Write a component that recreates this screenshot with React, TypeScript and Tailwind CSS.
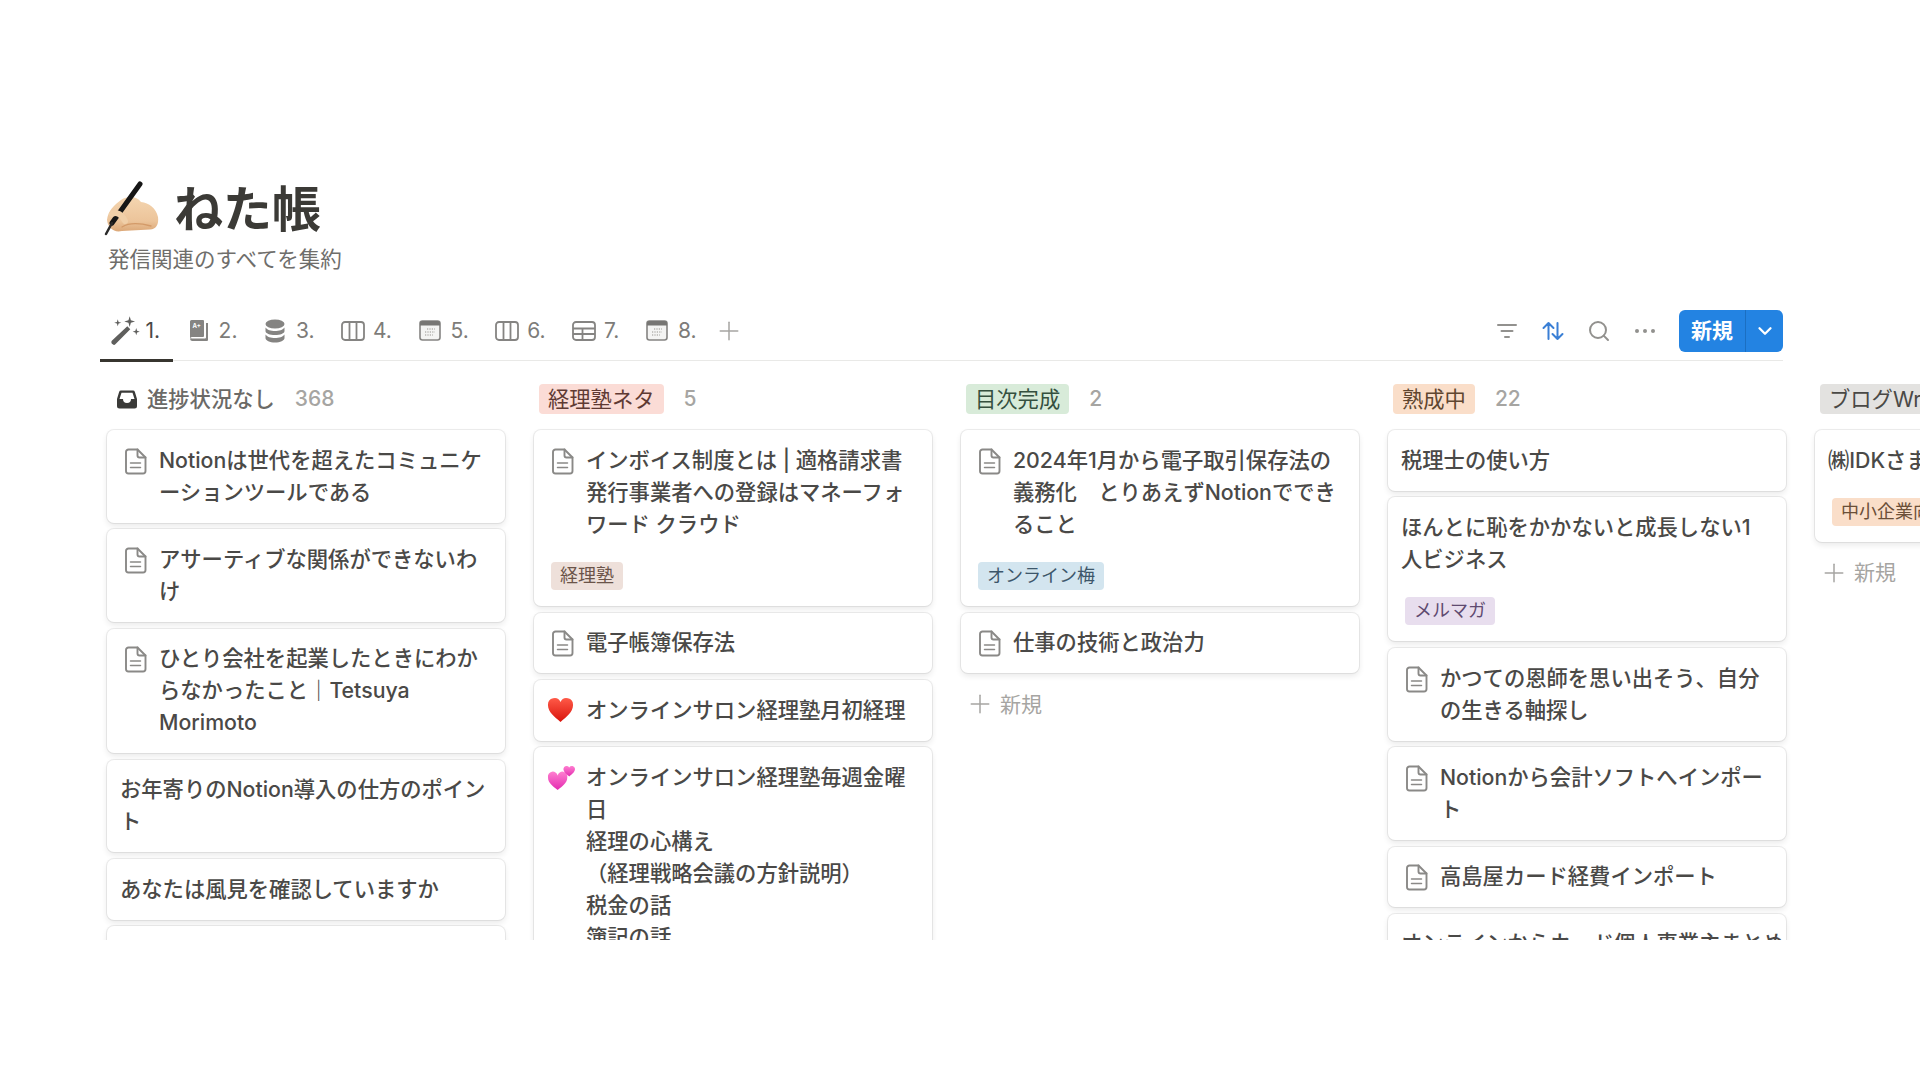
import { ChevronDown, Plus, Search } from 'lucide-react';
import type { ReactNode } from 'react';

// --- iconos dibujados a mano ---
function DocIcon() {
  return (
    <svg width="23" height="27" viewBox="0 0 23 27" fill="none" stroke="#8a8987" strokeWidth="1.900" strokeLinejoin="round" strokeLinecap="round">
      <path d="M4.500 1.500h9l8 8v13.500a2.500 2.500 0 0 1-2.500 2.500H4.500A2.500 2.500 0 0 1 2 23V4A2.500 2.500 0 0 1 4.500 1.500z" />
      <path d="M13.500 1.500V7.500a2 2 0 0 0 2 2h6" />
      <path d="M6.500 15h10M6.500 19.500h10" strokeWidth="1.500" />
    </svg>
  );
}

function RedHeart() {
  return (
    <svg width="27" height="26" viewBox="0 0 28 26" preserveAspectRatio="none">
      <defs>
        <linearGradient id="rh" x1="0" y1="0" x2="0" y2="1">
          <stop offset="0" stopColor="#ff5a48" />
          <stop offset="1" stopColor="#d9140c" />
        </linearGradient>
      </defs>
      <path d="M14 25C8 20 1 15 1 8a6.800 6.800 0 0 1 13-3 6.800 6.800 0 0 1 13 3c0 7-7 12-13 17z" fill="url(#rh)" />
    </svg>
  );
}

function PinkHearts() {
  return (
    <svg width="29" height="27" viewBox="0 0 30 28">
      <defs>
        <linearGradient id="ph" x1="0" y1="0" x2="0" y2="1">
          <stop offset="0" stopColor="#ff7fd0" />
          <stop offset="1" stopColor="#e32bb0" />
        </linearGradient>
      </defs>
      <path d="M11 27C6 23 1 19.500 1 14a4.900 4.900 0 0 1 10-2 4.900 4.900 0 0 1 10 2c0 5.500-5 9-10 13z" fill="url(#ph)" />
      <path d="M23 13c-3-2.500-6-4.500-6-8a3.300 3.300 0 0 1 6-1.500A3.300 3.300 0 0 1 29 5c0 3.500-3 5.500-6 8z" fill="url(#ph)" />
    </svg>
  );
}

function WritingHand() {
  return (
    <svg width="70" height="70" viewBox="0 0 70 70">
      <defs>
        <linearGradient id="hand" x1="0" y1="0" x2="0" y2="1">
          <stop offset="0" stopColor="#f4d5b0" />
          <stop offset="0.7" stopColor="#ecc49a" />
          <stop offset="1" stopColor="#dca878" />
        </linearGradient>
      </defs>
      <path d="M21 25C29 20 37 22 41 27C49 28 56 33 58 42C59 50 56 54 50 54.500L22 56C14 58 8 53 7 45C8 36 14 30 21 25Z" fill="url(#hand)" />
      <path d="M40 9L12 48" stroke="#161616" strokeWidth="5" strokeLinecap="round" />
      <path d="M12 48L6 59" stroke="#2a2a2a" strokeWidth="2.500" strokeLinecap="round" />
      <path d="M12 39C17 36 22 40 25 46" stroke="#f0cfa8" strokeWidth="6" fill="none" strokeLinecap="round" />
      <path d="M22 52C30 47 40 48 51 51" stroke="#d39a68" strokeWidth="1.300" fill="none" strokeLinecap="round" />
    </svg>
  );
}

function WandIcon() {
  return (
    <svg width="31" height="31" viewBox="0 0 26 26" fill="#5f5f5d" className="shrink-0">
      <path d="M1.500 21.500L14.500 9.500l2.500 2.500L4.500 24.500a1.500 1.500 0 0 1-2.200 0 2 2 0 0 1-.8-3z" />
      <path d="M16.500 1l1 3.500 3.500 1-3.500 1-1 3.500-1-3.500-3.500-1 3.500-1zM6.500 3.500l.7 2.300 2.300.7-2.300.7-.7 2.300-.7-2.300-2.300-.7 2.300-.7zM22 11l.7 2.300 2.300.7-2.300.7-.7 2.300-.7-2.300-2.300-.7 2.300-.7z" />
    </svg>
  );
}

function BookIcon() {
  return (
    <svg width="21" height="23" viewBox="0 0 21 23">
      <path d="M2 2.500A1.500 1.500 0 0 1 3.500 1H15a1 1 0 0 1 1 1v15a1 1 0 0 1-1 1H4a2 2 0 0 0-2 1.500z" fill="#858482" />
      <path d="M18 4h2v17a1 1 0 0 1-1 1H4a2.500 2.500 0 0 1-2-2.500A2.500 2.500 0 0 1 4 19.500h13a1 1 0 0 0 1-1z" fill="#858482" />
      <text x="4.500" y="9" fontSize="6" fontWeight="700" fill="#fff" fontFamily="Inter">A+</text>
    </svg>
  );
}

function DbIcon() {
  return (
    <svg width="20" height="24" viewBox="0 0 20 24" fill="#858482">
      <ellipse cx="10" cy="5" rx="9.500" ry="4.500" />
      <path d="M.5 8.500C2 11 6 12 10 12s8-1 9.500-3.500V12c0 2.500-4.300 4-9.500 4S.5 14.500.5 12z" />
      <path d="M.5 15.500C2 18 6 19 10 19s8-1 9.500-3.500V19c0 2.500-4.300 4.500-9.500 4.500S.5 21.500.5 19z" />
    </svg>
  );
}

function BoardIcon() {
  return (
    <svg width="24" height="20" viewBox="0 0 24 20" fill="none" stroke="#858482" strokeWidth="1.800">
      <rect x="1" y="1" width="22" height="18" rx="3" />
      <path d="M8.500 1v18M15.500 1v18" />
    </svg>
  );
}

function CalendarIcon() {
  return (
    <svg width="22" height="21" viewBox="0 0 22 21" fill="none">
      <rect x="1" y="1" width="20" height="19" rx="2.500" fill="#f4f4f3" stroke="#858482" strokeWidth="1.600" />
      <path d="M1 3.500A2.500 2.500 0 0 1 3.500 1h15A2.500 2.500 0 0 1 21 3.500V5.500H1z" fill="#777674" />
      <path d="M8 9h8M6 12h10M6 15h8" stroke="#b5b4b1" strokeWidth="1.300" strokeDasharray="1.200 1.200" />
    </svg>
  );
}

function TableIcon() {
  return (
    <svg width="24" height="20" viewBox="0 0 24 20" fill="none" stroke="#858482" strokeWidth="1.800">
      <rect x="1" y="1" width="22" height="18" rx="3" />
      <path d="M1 7.500h22M1 13h22M10.500 7.500V19" />
    </svg>
  );
}

function InboxIcon() {
  return (
    <svg width="22" height="22" viewBox="0 0 22 22">
      <path d="M5 2.500h12a2 2 0 0 1 1.900 1.400L21 11v7a2.500 2.500 0 0 1-2.500 2.500h-15A2.500 2.500 0 0 1 1 18v-7l2.100-7.100A2 2 0 0 1 5 2.500z" fill="#3a3a38" />
      <path d="M5.500 4.800h11L18.500 11H15a4 4 0 0 1-8 0H3.500z" fill="#fff" />
    </svg>
  );
}

function FilterIcon() {
  return (
    <svg width="24" height="24" viewBox="0 0 24 24" fill="none" stroke="#92918e" strokeWidth="2" strokeLinecap="round">
      <path d="M3 6h18M6.500 12h11M10 18h4" />
    </svg>
  );
}

function SortIcon() {
  return (
    <svg width="24" height="24" viewBox="0 0 24 24" fill="none" stroke="#3a7fd5" strokeWidth="2" strokeLinecap="round" strokeLinejoin="round">
      <path d="M7.500 20V4M2.500 9l5-5 5 5M16.500 4v16M11.500 15l5 5 5-5" />
    </svg>
  );
}

function DotsIcon() {
  return (
    <svg width="24" height="24" viewBox="0 0 24 24" fill="#92918e">
      <circle cx="4" cy="12" r="2" />
      <circle cx="12" cy="12" r="2" />
      <circle cx="20" cy="12" r="2" />
    </svg>
  );
}

// --- datos ---
const TABS: { icon: ReactNode; label: string; active?: boolean }[] = [
  { icon: <WandIcon />, label: '1.', active: true },
  { icon: <BookIcon />, label: '2.' },
  { icon: <DbIcon />, label: '3.' },
  { icon: <BoardIcon />, label: '4.' },
  { icon: <CalendarIcon />, label: '5.' },
  { icon: <BoardIcon />, label: '6.' },
  { icon: <TableIcon />, label: '7.' },
  { icon: <CalendarIcon />, label: '8.' },
];

type Card = {
  title: string;
  icon?: 'doc' | 'heart' | 'hearts';
  tag?: { label: string; className: string };
};

type Column = {
  head: ReactNode;
  count: string;
  cards: Card[];
  addNew?: boolean;
};

const COLUMNS: Column[] = [
  {
    head: (
      <span className="flex items-center gap-[9px] pl-[9px] font-medium text-[#6b6a67]">
        <InboxIcon />
        進捗状況なし
      </span>
    ),
    count: '368',
    cards: [
      { icon: 'doc', title: 'Notionは世代を超えたコミュニケ\nーションツールである' },
      { icon: 'doc', title: 'アサーティブな関係ができないわ\nけ' },
      { icon: 'doc', title: 'ひとり会社を起業したときにわか\nらなかったこと｜Tetsuya\nMorimoto' },
      { title: 'お年寄りのNotion導入の仕方のポイン\nト' },
      { title: 'あなたは風見を確認していますか' },
      { title: ' ' },
    ],
  },
  {
    head: <span className="ml-[5px] rounded-[4px] bg-[#fbdcd6] px-[9px] text-[#5f3a33]">経理塾ネタ</span>,
    count: '5',
    cards: [
      {
        icon: 'doc',
        title: 'インボイス制度とは | 適格請求書\n発行事業者への登録はマネーフォ\nワード クラウド',
        tag: { label: '経理塾', className: 'bg-[#eee0da] text-[#6b5449]' },
      },
      { icon: 'doc', title: '電子帳簿保存法' },
      { icon: 'heart', title: 'オンラインサロン経理塾月初経理' },
      {
        icon: 'hearts',
        title: 'オンラインサロン経理塾毎週金曜\n日\n経理の心構え\n（経理戦略会議の方針説明）\n税金の話\n簿記の話',
      },
    ],
  },
  {
    head: <span className="ml-[5px] rounded-[4px] bg-[#d8ebd9] px-[9px] text-[#35503f]">目次完成</span>,
    count: '2',
    cards: [
      {
        icon: 'doc',
        title: '2024年1月から電子取引保存法の\n義務化　とりあえずNotionででき\nること',
        tag: { label: 'オンライン梅', className: 'bg-[#d3e5ef] text-[#3d566a]' },
      },
      { icon: 'doc', title: '仕事の技術と政治力' },
    ],
    addNew: true,
  },
  {
    head: <span className="ml-[5px] rounded-[4px] bg-[#fadec9] px-[9px] text-[#5f4630]">熟成中</span>,
    count: '22',
    cards: [
      { title: '税理士の使い方' },
      {
        title: 'ほんとに恥をかかないと成長しない1\n人ビジネス',
        tag: { label: 'メルマガ', className: 'bg-[#e8deee] text-[#5f4a70]' },
      },
      { icon: 'doc', title: 'かつての恩師を思い出そう、自分\nの生きる軸探し' },
      { icon: 'doc', title: 'Notionから会計ソフトへインポー\nト' },
      { icon: 'doc', title: '高島屋カード経費インポート' },
      { title: 'オンラインからカード個人事業主まとめ' },
    ],
  },
  {
    head: <span className="ml-[5px] rounded-[4px] bg-[#e3e2e0] px-[9px] text-[#4a4946]">ブログWriting</span>,
    count: '',
    cards: [
      {
        title: '㈱IDKさま',
        tag: { label: '中小企業向け', className: 'bg-[#fadec9] text-[#6b4f38]' },
      },
    ],
    addNew: true,
  },
];

function CardIcon({ icon }: { icon: Card['icon'] }) {
  if (icon === 'doc') {
    return (
      <span className="ml-[4px] mt-[4px] w-[35px] shrink-0">
        <DocIcon />
      </span>
    );
  }
  return (
    <span className="mt-[3px] w-[39px] shrink-0">
      {icon === 'heart' ? <RedHeart /> : <PinkHearts />}
    </span>
  );
}

function BoardCard({ card }: { card: Card }) {
  return (
    <div className="shrink-0 rounded-[7px] bg-white px-[13px] pb-[15px] pt-[13.5px] shadow-[0_0_0_1px_rgba(15,15,15,0.07),0_3px_6px_rgba(15,15,15,0.09)]">
      <div className="flex items-start">
        {card.icon && <CardIcon icon={card.icon} />}
        <p className="whitespace-pre text-[21.3px] font-medium leading-[32px] text-[#4a4947]">{card.title}</p>
      </div>
      {card.tag && (
        <div className={`ml-[4px] mt-[22.5px] mb-[1px] w-fit whitespace-nowrap rounded-[4px] px-[9px] text-[18px] leading-[28px] ${card.tag.className}`}>
          {card.tag.label}
        </div>
      )}
    </div>
  );
}

function BoardColumn({ column }: { column: Column }) {
  return (
    <div className="w-[398px] shrink-0">
      <div className="mb-[16px] flex h-[30px] items-center whitespace-nowrap text-[21.3px] leading-[30px]">
        {column.head}
        {column.count && <span className="ml-[20px] text-[21px] font-medium text-[#a6a5a2]">{column.count}</span>}
      </div>
      <div className="flex flex-col gap-[6.8px]">
        {column.cards.map((card, i) => (
          <BoardCard key={i} card={card} />
        ))}
      </div>
      {column.addNew && (
        <div className="mt-[15px] flex h-[32px] items-center gap-[5px] pl-[4px] text-[21px] text-[#a6a5a2]">
          <Plus size={30} strokeWidth={1.2} />
          新規
        </div>
      )}
    </div>
  );
}

export default function App() {
  return (
    <div className="h-[1080px] w-[1920px] overflow-hidden bg-white pt-[175px] font-['Inter','Noto_Sans_CJK_JP',sans-serif] text-[#37352f]">
      {/* título */}
      <div className="ml-[100px] flex h-[70px] items-center gap-[4px]">
        <WritingHand />
        <h1 className="text-[49px] font-bold leading-[70px] text-[#3b3a36]">ねた帳</h1>
      </div>
      <p className="ml-[108px] mt-[-1px] text-[21.5px] leading-[31px] text-[#6f6e6b]">発信関連のすべてを集約</p>

      {/* pestañas y acciones */}
      <div className="ml-[100px] mt-[26px] flex h-[60px] w-[1683px] items-center border-b-[1.5px] border-[#e9e9e7]">
        {TABS.map((tab) => (
          <div
            key={tab.label}
            className="relative flex h-full items-center gap-[8.5px] px-[13px] text-[21px] text-[#7d7c79]"
          >
            <span className="flex w-[24px] items-center justify-center">{tab.icon}</span>
            <span className={tab.active ? 'text-[#4a4947]' : ''}>{tab.label}</span>
            {tab.active && <span className="absolute inset-x-0 bottom-[-1.5px] h-[3px] bg-[#37352f]" />}
          </div>
        ))}
        <Plus size={30} strokeWidth={1.2} className="ml-[5px] text-[#a6a5a2]" />

        <div className="ml-auto flex items-center gap-[22px]">
          <span className="ml-[1px]">
            <FilterIcon />
          </span>
          <SortIcon />
          <Search size={24} strokeWidth={2} className="text-[#92918e]" />
          <DotsIcon />
          <div className="flex h-[42px] w-[104px] items-stretch rounded-[6px] bg-[#2383e2] text-white">
            <span className="flex w-[67px] items-center justify-center border-r border-[#1b6fc2] text-[21px] font-semibold">新規</span>
            <span className="flex flex-1 items-center justify-center">
              <ChevronDown size={22} strokeWidth={2.5} />
            </span>
          </div>
        </div>
      </div>

      {/* tablero */}
      <div className="flex h-[579px] gap-[29px] overflow-hidden pl-[107px] pt-[23px]">
        {COLUMNS.map((column, i) => (
          <BoardColumn key={i} column={column} />
        ))}
      </div>
    </div>
  );
}
